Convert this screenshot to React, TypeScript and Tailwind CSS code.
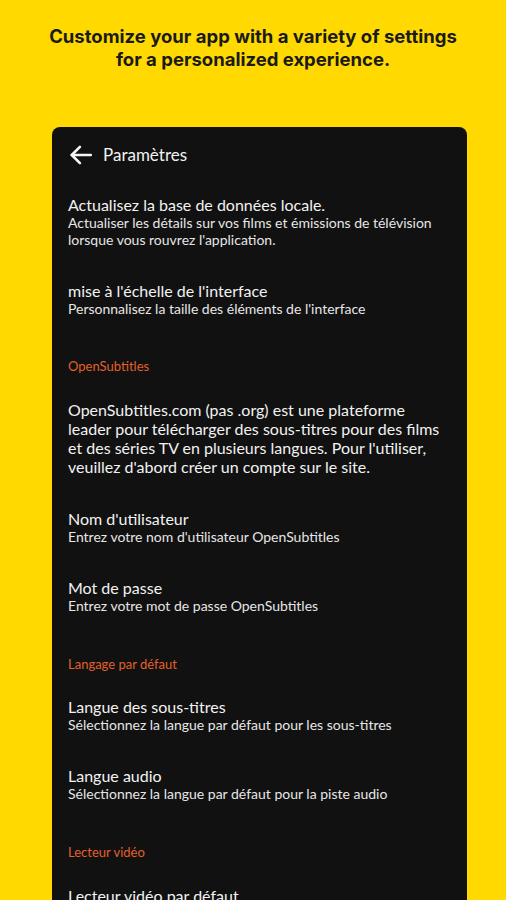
import React from "react";

type Row = { title: string; sub?: string };

const Item: React.FC<Row & { className?: string }> = ({ title, sub, className }) => (
    <div className={className}>
        <p className="text-[16px] leading-[19px] text-[#f2f2f2]">{title}</p>
        {sub && <p className="text-[14px] leading-[17px] text-[#e6e6e6]">{sub}</p>}
    </div>
);

const Section: React.FC<{ label: string; className?: string }> = ({ label, className }) => (
    <p className={`text-[13px] leading-[16px] text-[#e2602a] ${className ?? ""}`}>{label}</p>
);

export default function App() {
    return (
        <div className="w-[506px] h-[900px] overflow-hidden bg-[#ffd900] flex flex-col">
            <h1
                className="mt-[25px] text-center text-[18.5px] leading-[23px] font-bold text-[#1a1a1a]"
                style={{ fontFamily: "Inter, 'Liberation Sans', sans-serif" }}
            >
                Customize your app with a variety of settings
                <br />
                for a personalized experience.
            </h1>

            <div
                className="mt-[56px] ml-[52px] w-[415px] flex-1 rounded-t-[8px] bg-[#111111] px-[16px] text-white"
                style={{ fontFamily: "Lato, 'Noto Sans', sans-serif" }}
            >
                {/* top bar */}
                <div className="flex items-center h-[56px]">
                    <svg width="26" height="26" viewBox="0 0 24 24" fill="none" stroke="#f5f5f5" strokeWidth="2.4" strokeLinecap="round" strokeLinejoin="round">
                        <path d="M21 12H3.5" />
                        <path d="M11 4.5L3.5 12l7.5 7.5" />
                    </svg>
                    <span className="ml-[9px] text-[17px] text-[#f2f2f2]">Paramètres</span>
                </div>

                <Item
                    className="mt-[12px]"
                    title="Actualisez la base de données locale."
                    sub="Actualiser les détails sur vos films et émissions de télévision lorsque vous rouvrez l'application."
                />
                <Item
                    className="mt-[33px]"
                    title="mise à l'échelle de l'interface"
                    sub="Personnalisez la taille des éléments de l'interface"
                />

                <Section className="mt-[41px]" label="OpenSubtitles" />

                <p className="mt-[26px] text-[16px] leading-[19px] text-[#f2f2f2]">
                    OpenSubtitles.com (pas .org) est une plateforme leader pour télécharger des sous-titres pour des films et des séries TV en plusieurs langues. Pour l'utiliser, veuillez d'abord créer un compte sur le site.
                </p>

                <Item className="mt-[33px]" title="Nom d'utilisateur" sub="Entrez votre nom d'utilisateur OpenSubtitles" />
                <Item className="mt-[33px]" title="Mot de passe" sub="Entrez votre mot de passe OpenSubtitles" />

                <Section className="mt-[42px]" label="Langage par défaut" />

                <Item className="mt-[25px]" title="Langue des sous-titres" sub="Sélectionnez la langue par défaut pour les sous-titres" />
                <Item className="mt-[33px]" title="Langue audio" sub="Sélectionnez la langue par défaut pour la piste audio" />

                <Section className="mt-[42px]" label="Lecteur vidéo" />

                <Item className="mt-[26px]" title="Lecteur vidéo par défaut" />
            </div>
        </div>
    );
}
